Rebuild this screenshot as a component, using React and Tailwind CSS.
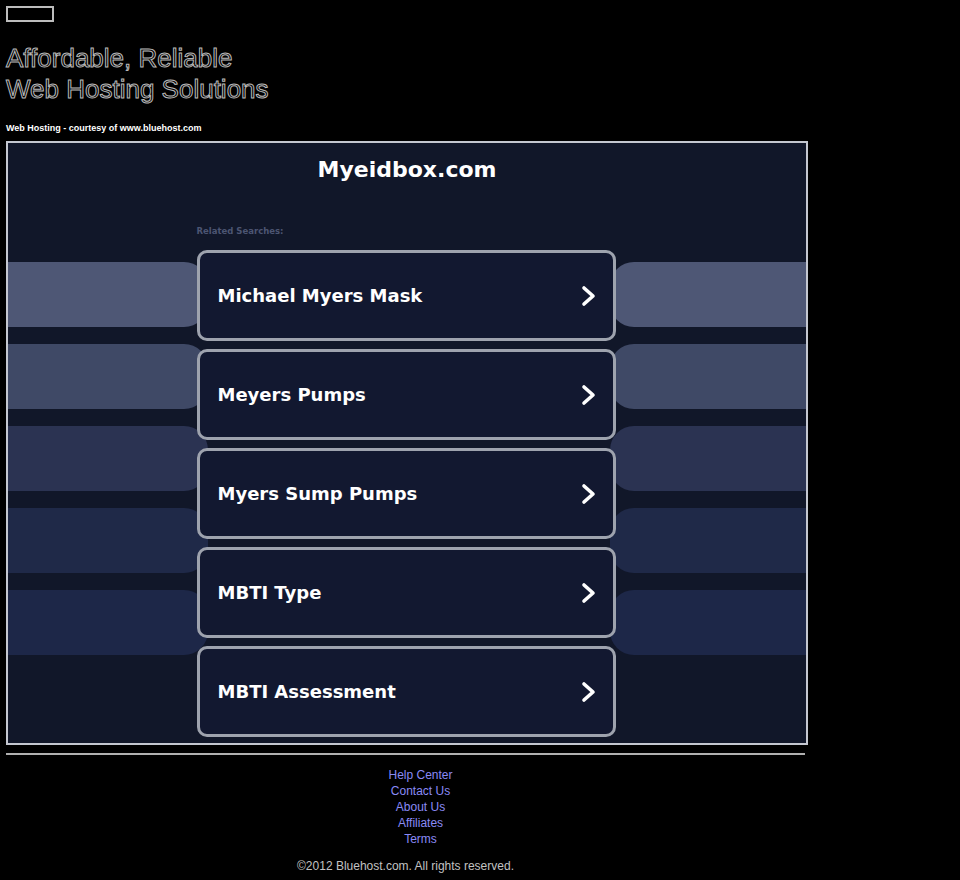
import React from 'react'

const searches = [
  'Michael Myers Mask',
  'Meyers Pumps',
  'Myers Sump Pumps',
  'MBTI Type',
  'MBTI Assessment',
]

const bands = ['bg-[#4e5775]', 'bg-[#3f4966]', 'bg-[#2b3352]', 'bg-[#1f2948]', 'bg-[#1d2748]']

const links = ['Help Center', 'Contact Us', 'About Us', 'Affiliates', 'Terms']

function Chevron() {
  return (
    <svg width="18" height="22" viewBox="0 0 18 22" fill="none">
      <polyline
        points="4,3 13,11 4,19"
        stroke="#fff"
        strokeWidth="3.6"
        strokeLinecap="round"
        strokeLinejoin="round"
      />
    </svg>
  )
}

export default function App() {
  return (
    <div className="min-h-[880px] bg-black px-[6px] pt-[6px] font-['Liberation_Sans',Arial,sans-serif]">
      <div className="w-[48px] h-[16px] border-2 border-[#bdbdbd]" />

      <h1 className="mt-[21px] text-[26px] leading-[31px] font-normal text-black [-webkit-text-stroke:1px_#b8b8b8]">
        Affordable, Reliable
        <br />
        Web Hosting Solutions
      </h1>

      <p className="mt-[17px] text-[9px] leading-[12px] font-bold text-white">
        Web Hosting - courtesy of www.bluehost.com
      </p>

      <div className="relative mt-[7px] w-[802px] h-[604px] border-2 border-[#c4c7d0] bg-[#111729] overflow-hidden font-['DejaVu_Sans',sans-serif]">
        {/* decorative bands behind the list */}
        <div className="absolute left-0 right-0 top-[119px] flex flex-col gap-[17px]">
          {bands.map((c, i) => (
            <div key={i} className="flex justify-between h-[65px]">
              <div className={`w-[200px] rounded-r-[24px] ${c}`} />
              <div className={`w-[196px] rounded-l-[24px] ${c}`} />
            </div>
          ))}
        </div>

        <div className="relative flex flex-col items-center pt-[13px]">
          <h2 className="text-[22px] leading-[28px] font-bold text-white">Myeidbox.com</h2>
          <div className="w-[419px] mt-[41px] -translate-x-[1px]">
            <p className="text-[8.5px] leading-[12px] font-bold text-[#4c5572]">Related Searches:</p>
            <div className="mt-[13px] flex flex-col gap-[8px]">
              {searches.map((s) => (
                <div
                  key={s}
                  className="h-[91px] flex items-center justify-between pl-[18px] pr-[15px] rounded-[10px] border-[3px] border-[#9ea3ae] bg-[#121830]"
                >
                  <span className="text-[18px] font-bold text-white">{s}</span>
                  <Chevron />
                </div>
              ))}
            </div>
          </div>
        </div>
      </div>

      <div className="w-[799px] mt-[8px] border-t-2 border-[#b0b0b0]" />

      <ul className="mt-[12px] pl-[30px] w-[799px] flex flex-col items-center text-[12px] leading-[16px] text-[#8a8af6]">
        {links.map((l) => (
          <li key={l}>
            <a href="#">{l}</a>
          </li>
        ))}
      </ul>

      <p className="w-[799px] mt-[11px] text-center text-[12px] leading-[16px] text-[#c2c2c2]">
        ©2012 Bluehost.com. All rights reserved.
      </p>
    </div>
  )
}
